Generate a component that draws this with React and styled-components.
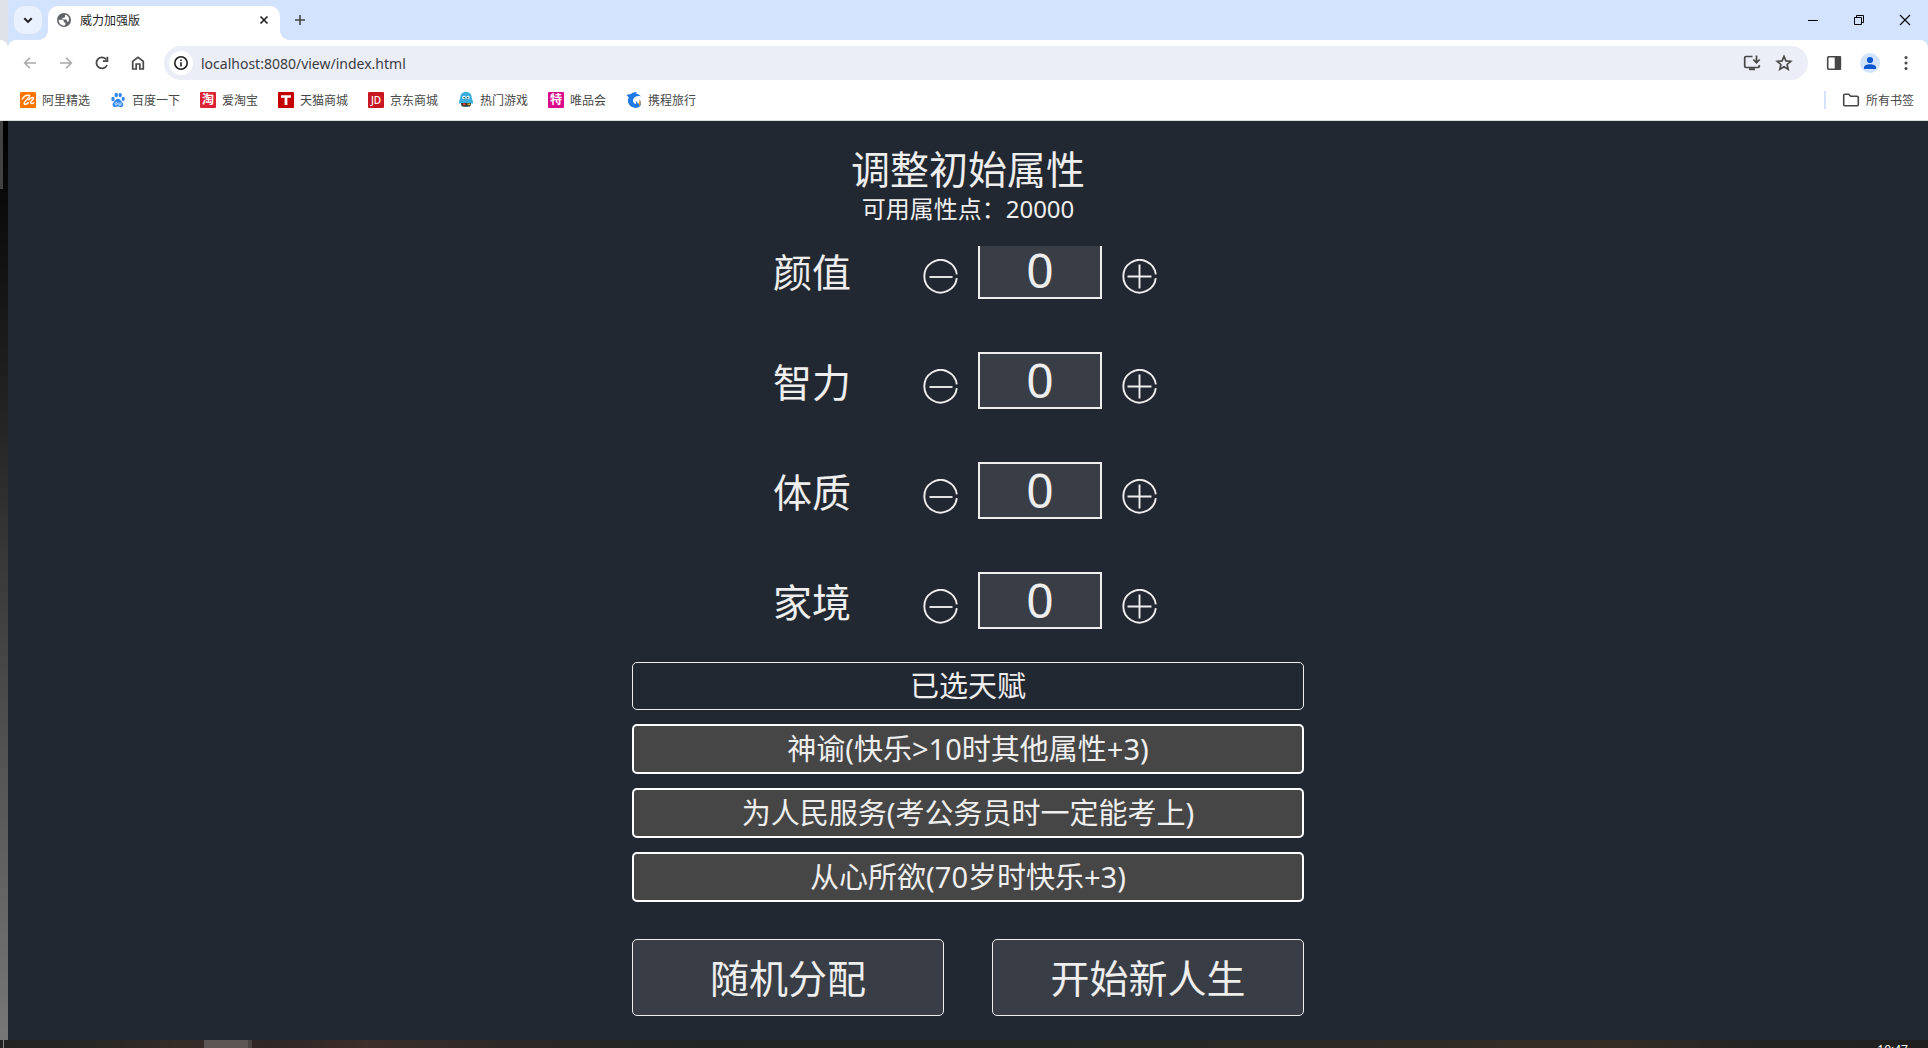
import React, { useState } from "react";
import styled, { createGlobalStyle } from "styled-components";

const GlobalStyle = createGlobalStyle`
  *, *::before, *::after { box-sizing: border-box; }
  body {
    margin: 0;
    background: #222831;
    font-family: "Noto Sans", "Noto Sans CJK SC", sans-serif;
  }
  button, input { font: inherit; margin: 0; padding: 0; }
`;

/* ---------- desktop ---------- */

const Desktop = styled.div`
  display: flex;
  flex-direction: column;
  min-height: 100vh;
`;

const Windows = styled.div`
  display: flex;
  flex: 1;
`;

const BackWindow = styled.div`
  display: flex;
  flex-direction: column;
  flex: none;
  width: 8px;
  background: #dde1e8;
`;

const BackToolbar = styled.div`
  height: 80px;
  margin-top: 40px;
  background: #fff;
  border-top-right-radius: 8px;
`;

const BackPage = styled.div`
  flex: 1;
  border-top: 1px solid #d6dfe0;
  background: linear-gradient(#000 0%, #0a0a0a 8%, #222 31%, #484848 60%, #777 100%);
`;

const BackThumb = styled.div`
  width: 3px;
  height: 68px;
  background: #424242;
`;

const Browser = styled.div`
  display: flex;
  flex-direction: column;
  flex: 1;
  min-width: 0;
  background: #d3e3fd;
`;

const Taskbar = styled.footer`
  display: flex;
  height: 8px;
  overflow: hidden;
  background: linear-gradient(90deg, #232423 0%, #272724 5%, #352b27 9%, #302625 14%, #3c2e29 19%, #2b2726 27%, #202624 37%, #232826 55%, #292824 66%, #362d25 83%, #242422 91%, #1f1f20 100%);
`;

const TaskDivider = styled.span`
  width: 1px;
  margin-left: 3px;
  background: #8a8a8a;
`;

const TaskActive = styled.span`
  width: 48px;
  margin-left: 200px;
  border-right: 4px solid #4b4443;
  background: #5e5654;
`;

const Clock = styled.time`
  margin: 2px 20px 0 auto;
  color: #fff;
  font-size: 12px;
  line-height: 16px;
`;

/* ---------- browser chrome ---------- */

const IconButton = styled.button`
  display: grid;
  place-items: center;
  flex: none;
  width: ${(p) => p.$w || 36}px;
  height: ${(p) => p.$h || 34}px;
  border: 0;
  border-radius: ${(p) => p.$radius || 0}px;
  background: ${(p) => p.$bg || "transparent"};
  color: ${(p) => p.$color || "#474747"};
`;

const TitleBar = styled.header`
  display: flex;
  align-items: flex-start;
  height: 40px;
  padding: 6px 0 0 6px;
`;

const Tab = styled.div`
  position: relative;
  display: flex;
  align-items: center;
  width: 232px;
  height: 34px;
  margin-left: 6px;
  padding: 0 6px 6px 8px;
  border-radius: 10px 10px 0 0;
  background: #fff;

  &::before, &::after {
    content: "";
    position: absolute;
    bottom: 0;
    width: 10px;
    height: 10px;
  }
  &::before {
    right: 100%;
    background: radial-gradient(circle at 0 0, transparent 10px, #fff 10px);
  }
  &::after {
    left: 100%;
    background: radial-gradient(circle at 100% 0, transparent 10px, #fff 10px);
  }
`;

const TabTitle = styled.span`
  flex: 1;
  padding-top: 2px;
  margin-left: 8px;
  color: #1f1f1f;
  font-size: 12px;
  line-height: 16px;
`;

const WindowControls = styled.div`
  display: flex;
  margin-left: auto;
`;

const Toolbar = styled.div`
  display: flex;
  align-items: center;
  height: 46px;
  padding: 0 4px;
  border-radius: 8px 8px 0 0;
  background: #fff;
`;

const AddressBar = styled.div`
  display: flex;
  align-items: center;
  flex: 1;
  height: 34px;
  margin: 0 8px;
  padding: 0 8px 0 5px;
  border-radius: 17px;
  background: #ebeef7;
`;

const AddressInput = styled.input`
  flex: 1;
  min-width: 0;
  height: 24px;
  margin-left: 8px;
  border: 0;
  outline: 0;
  background: transparent;
  color: #3a3b3f;
  font-family: "Noto Sans", sans-serif;
  font-size: 14px;
`;

const Bookmarks = styled.nav`
  display: flex;
  align-items: center;
  gap: 20px;
  height: 34px;
  padding: 0 14px 6px 12px;
  background: #fff;
`;

const Bookmark = styled.a`
  display: flex;
  align-items: center;
  gap: 6px;
  color: #474747;
  font-size: 12px;
  line-height: 16px;
  text-decoration: none;
`;

const BookmarkName = styled.span`
  padding-top: 2px;
`;

const AllBookmarks = styled(Bookmark)`
  margin-left: auto;
  padding-left: 16px;
  border-left: 2px solid #d3e3fd;
`;

/* ---------- page ---------- */

const Page = styled.main`
  display: flex;
  flex-direction: column;
  align-items: center;
  flex: 1;
  padding: 25px 0 24px;
  border-top: 1px solid #d6dfe0;
  background: #222831;
  color: #eee;
`;

const Title = styled.h1`
  margin: 0;
  font-size: 39px;
  font-weight: 400;
  line-height: 46px;
`;

const Points = styled.p`
  margin: 0;
  font-size: 24px;
  line-height: 34px;
`;

const Attributes = styled.ul`
  display: flex;
  flex-direction: column;
  justify-content: flex-end;
  gap: 53px;
  width: 390px;
  height: 383px;
  margin: 20px 0 0;
  padding: 0;
  overflow: hidden;
  list-style: none;
`;

const Attribute = styled.li`
  display: flex;
  align-items: center;
  flex: none;
  gap: 20px;
  height: 57px;
  padding-right: 6px;
`;

const AttributeName = styled.label`
  flex: 1;
  padding-top: 2px;
  font-size: 39px;
  line-height: 46px;
`;

const StepButton = styled.button`
  display: block;
  width: 35px;
  height: 47px;
  padding-top: 12px;
  border: 0;
  background: transparent;
  color: #eee;
  cursor: pointer;

  svg { display: block; }
`;

const AttributeValue = styled.input`
  width: 124px;
  height: 57px;
  padding-bottom: 2px;
  border: 2px solid #eee;
  border-radius: 0;
  outline: 0;
  background: #393e46;
  color: #eee;
  font-size: 48px;
  line-height: 48px;
  text-align: center;
`;

const Talents = styled.ul`
  display: flex;
  flex-direction: column;
  gap: 14px;
  width: 35%;
  margin: 33px 0 0;
  padding: 0;
  list-style: none;
`;

const Talent = styled.li`
  height: ${(p) => (p.$heading ? 48 : 50)}px;
  border: ${(p) => (p.$heading ? "1px solid #eee" : "2px solid #fff")};
  border-radius: 5px;
  background: ${(p) => (p.$heading ? "transparent" : "#464646")};
  font-size: 29px;
  line-height: 46px;
  text-align: center;
`;

const Actions = styled.div`
  display: flex;
  gap: 48px;
  width: 35%;
  margin-top: 37px;
`;

const ActionButton = styled.button`
  flex: 1;
  height: 77px;
  border: 1px solid #eee;
  border-radius: 5px;
  background: #393e46;
  color: #eee;
  font-size: 39px;
  line-height: 46px;
  cursor: pointer;
`;

/* ---------- icons ---------- */

const Icon = ({ size = 16, children, ...rest }) => (
  <svg width={size} height={size} viewBox={`0 0 ${size} ${size}`} fill="none" stroke="currentColor" strokeWidth="1.6" aria-hidden="true" {...rest}>
    {children}
  </svg>
);

const GlobeIcon = () => (
  <Icon stroke="none">
    <circle cx="8" cy="8" r="7" fill="#5f6368" />
    <path d="M2.6 7.8h3.2c1.5 0 2 .8 2 2v.6h1.6v2.4c-.6.8-1.6 1-2.6.8C4.2 13 2.6 10.5 2.6 7.8z" fill="#fff" />
    <path d="M9 2.7v1.5c0 1-.7 1.5-1.700 1.500h-.9v1.700h3.200c1 0 1.400.7 1.400 1.500v.9h1.300c.9-1.700 1-3.600-.2-5.200C11.300 3.400 10.200 2.800 9 2.700z" fill="#fff" />
  </Icon>
);

const BackIcon = () => <Icon><path d="M14 8H3M8 2.700L2.700 8 8 13.300" /></Icon>;
const ForwardIcon = () => <Icon><path d="M2 8h11M8 2.700L13.300 8 8 13.300" /></Icon>;
const ReloadIcon = () => (
  <Icon strokeWidth="1.800">
    <path d="M13 10A5.500 5.500 0 1 1 12.300 4.500" />
    <path d="M13.400 1.700v4.500H8.900" />
  </Icon>
);
const HomeIcon = () => (
  <Icon strokeWidth="1.700">
    <path d="M2.700 14V6.300L8 2.300l5.300 4V14H9.800V9H6.200v5z" />
  </Icon>
);
const InfoIcon = () => (
  <Icon>
    <circle cx="8" cy="8" r="6.200" />
    <path d="M8 7.200V11.500M8 4.500v1.600" />
  </Icon>
);
const InstallIcon = () => (
  <Icon size={18} strokeWidth="1.700">
    <path d="M9.500 2.500H3A1.300 1.300 0 0 0 1.700 3.800v8.400A1.300 1.300 0 0 0 3 13.500h12a1.300 1.300 0 0 0 1.300-1.300V11" />
    <path d="M6 15.200h6" strokeWidth="2" />
    <path d="M13.500 1.500v7M10.300 5.500l3.200 3.200 3.200-3.200" />
  </Icon>
);
const StarIcon = () => (
  <Icon size={18}>
    <path d="M9 2.400l1.900 4.500 4.900.4-3.700 3.200 1.100 4.800L9 12.700l-4.200 2.600 1.100-4.800-3.700-3.200 4.900-.4z" strokeWidth="1.600" />
  </Icon>
);
const PanelIcon = () => (
  <Icon>
    <rect x="1.700" y="1.700" width="12.600" height="12.600" rx="1" />
    <path d="M9.500 2h4.800v12H9.500z" fill="currentColor" />
  </Icon>
);
const ProfileIcon = () => (
  <Icon size={20} stroke="none">
    <circle cx="10" cy="10" r="10" fill="#d3e3fd" />
    <circle cx="10" cy="7" r="3.100" fill="#0b57d0" />
    <path d="M4 16v-1.500c0-2.200 3-3.300 6-3.300s6 1.100 6 3.300V16z" fill="#0b57d0" />
  </Icon>
);
const MoreIcon = () => (
  <Icon fill="currentColor" stroke="none">
    <circle cx="8" cy="2.600" r="1.500" /><circle cx="8" cy="8" r="1.500" /><circle cx="8" cy="13.400" r="1.500" />
  </Icon>
);
const FolderIcon = () => (
  <Icon size={18}>
    <path d="M1.700 13.500v-9A1.200 1.200 0 0 1 2.900 3.300h3.900l1.900 2h6.400a1.200 1.200 0 0 1 1.200 1.200v7a1.200 1.200 0 0 1-1.200 1.200H2.900a1.200 1.200 0 0 1-1.200-1.200z" />
  </Icon>
);

const AliIcon = () => (
  <Icon>
    <rect width="16" height="16" rx="1.500" fill="#ff7300" stroke="none" />
    <path d="M2 7.500C3.500 4.500 6.500 3 8.800 3.300c1.700.3.300 2.200-1.800 4.200-2 1.900-3.400 3.500-2.600 4.400.9.900 3-.2 4.300-1.700" stroke="#fff" strokeWidth="1.500" />
    <path d="M8.500 8.200c1.500-1.700 3.400-3 4.600-2.500 1.300.6-.5 2-1.600 3.200-1 1.100-1.300 2.500 0 2.700 1 .1 2-.5 2.700-1.200" stroke="#fff" strokeWidth="1.400" />
  </Icon>
);
const PawIcon = () => (
  <Icon stroke="none" fill="#2f86f6">
    <ellipse cx="3" cy="7" rx="1.700" ry="2.200" />
    <ellipse cx="6.200" cy="3" rx="1.700" ry="2.200" />
    <ellipse cx="10.200" cy="3.100" rx="1.700" ry="2.200" />
    <ellipse cx="13.200" cy="6.900" rx="1.600" ry="2.100" />
    <path d="M8 6.800c1.800 0 2.500 1.700 4 3.200 2.500 2.500 1 5-1 5-1.200 0-2-.5-3-.5s-1.900.5-3.100.5c-2.200 0-3.500-2.700-1-5C5.500 8.600 6.200 6.800 8 6.800z" />
    <circle cx="6.200" cy="11.800" r="1.200" fill="none" stroke="#fff" strokeWidth=".8" />
    <path d="M9 10.300v2.800h2v-2.800" fill="none" stroke="#fff" strokeWidth=".8" />
  </Icon>
);
const SquareIcon = ({ color, label, size, y, weight = 500 }) => (
  <Icon>
    <rect width="16" height="16" rx="1" fill={color} stroke="none" />
    <text x="8" y={y} fontSize={size} stroke="none" fill="#fff" textAnchor="middle" fontWeight={weight}>{label}</text>
  </Icon>
);
const TmallIcon = () => (
  <Icon stroke="none">
    <rect width="16" height="16" rx="1" fill="#c40000" />
    <path d="M3 3.200h10v2.500H9.400V13H6.600V5.700H3z" fill="#fff" />
  </Icon>
);
const GameIcon = () => (
  <Icon stroke="none">
    <path d="M8 0c3.700 0 5.700 2.200 5.700 5.300 0 2 1.800 4.200 1.500 6.200-.7.400-1.500-.3-1.700-.7-.3 1.700-2 4.200-5.500 4.200s-5.200-2.500-5.500-4.200c-.2.400-1 1.100-1.700.7-.3-2 1.500-4.200 1.500-6.200C2.300 2.200 4.300 0 8 0z" fill="#39afdd" />
    <circle cx="6" cy="5.500" r="1.700" fill="#fff" /><circle cx="10" cy="5.500" r="1.700" fill="#fff" />
    <circle cx="6.200" cy="5.700" r=".8" fill="#222" /><circle cx="9.800" cy="5.700" r=".8" fill="#222" />
    <path d="M3 11h10l-.8 3.500H3.800z" fill="#333" />
    <path d="M5 11.300h2.500v2H5z" fill="#e04a2c" />
    <path d="M9.500 11.500H12v1.600H9.500z" fill="#f3b22c" />
  </Icon>
);
const DolphinIcon = () => (
  <Icon stroke="none">
    <path d="M.5 3.800C1.800 2 3.500 2.300 4.800 2 6.500.3 9 0 11 .5c-.6.4-.8.900-.7 1.300 2 .3 3.700 1.200 4.500 2.700-2-.6-4-.5-5.300.3C7.500 6 6.500 8 7.300 10c.5 1.300 1.700 2 2.500 2 .5-1 .3-2-.5-3 1.800.5 2.400 1.500 2.500 2.800 1.500-.8 2-2.300 1.700-4.300 2.200 2.500 2 5.200.2 7-2 2-6.700 2-9.500-.7C1.700 11.300 1.200 8 2.800 5.200 2 4.500 1.300 4 .5 3.800z" fill="#1f7ae6" />
    <path d="M13.300 7.500c2.200 2.500 1.700 5.500-.5 7 .8-1.500.7-2.300-.3-3.200.8-1 1.100-2.300.8-3.800z" fill="#f7a428" />
  </Icon>
);

const RING = "M33.800 15.300A16.300 16.300 0 1 0 33.800 19.200";

const MinusIcon = () => (
  <Icon size={35} strokeWidth="1.900">
    <path d={RING} />
    <path d="M6.500 18h23" />
  </Icon>
);
const PlusIcon = () => (
  <Icon size={35} strokeWidth="1.900">
    <path d={RING} />
    <path d="M5.500 17.500h24M17.500 5.500v24" />
  </Icon>
);

/* ---------- data ---------- */

const TOTAL_POINTS = 20000;

const bookmarks = [
  { name: "阿里精选", icon: <AliIcon /> },
  { name: "百度一下", icon: <PawIcon /> },
  { name: "爱淘宝", icon: <SquareIcon color="#db2334" label="淘" size={12} y={12} weight={700} /> },
  { name: "天猫商城", icon: <TmallIcon /> },
  { name: "京东商城", icon: <SquareIcon color="#c81623" label="JD" size={10} y={12} /> },
  { name: "热门游戏", icon: <GameIcon /> },
  { name: "唯品会", icon: <SquareIcon color="#da0c8c" label="特" size={12} y={12} weight={700} /> },
  { name: "携程旅行", icon: <DolphinIcon /> },
];

const attributes = [
  { key: "looks", name: "颜值" },
  { key: "mind", name: "智力" },
  { key: "body", name: "体质" },
  { key: "wealth", name: "家境" },
];

const talents = [
  "神谕(快乐>10时其他属性+3)",
  "为人民服务(考公务员时一定能考上)",
  "从心所欲(70岁时快乐+3)",
];

/* ---------- app ---------- */

function BrowserChrome() {
  return (
    <>
      <TitleBar>
        <IconButton $w={28} $h={28} $radius={10} $bg="#e9f0fe" $color="#1f1f1f" aria-label="搜索标签页">
          <Icon strokeWidth="2"><path d="M4.300 6.200L8 9.900l3.700-3.700" /></Icon>
        </IconButton>
        <Tab>
          <GlobeIcon />
          <TabTitle>威力加强版</TabTitle>
          <IconButton $w={20} $h={20} $color="#1f1f1f" aria-label="关闭标签页">
            <Icon><path d="M4.500 4.500l7 7M11.500 4.500l-7 7" /></Icon>
          </IconButton>
        </Tab>
        <IconButton $w={40} $h={28} aria-label="新标签页">
          <Icon><path d="M8 3v10M3 8h10" /></Icon>
        </IconButton>
        <WindowControls>
          <IconButton $w={46} $h={28} $color="#000" aria-label="最小化">
            <Icon strokeWidth="1"><path d="M3 8.500h10" /></Icon>
          </IconButton>
          <IconButton $w={46} $h={28} $color="#000" aria-label="还原">
            <Icon strokeWidth="1"><path d="M3.500 5.500h7v7h-7zM5.500 5.500v-2h7v7h-2" /></Icon>
          </IconButton>
          <IconButton $w={46} $h={28} $color="#000" aria-label="关闭">
            <Icon strokeWidth="1.100"><path d="M3 3l10 10M13 3L3 13" /></Icon>
          </IconButton>
        </WindowControls>
      </TitleBar>
      <Toolbar>
        <IconButton $color="#a9a9a9" aria-label="后退"><BackIcon /></IconButton>
        <IconButton $color="#a9a9a9" aria-label="前进"><ForwardIcon /></IconButton>
        <IconButton aria-label="重新加载"><ReloadIcon /></IconButton>
        <IconButton aria-label="主页"><HomeIcon /></IconButton>
        <AddressBar>
          <IconButton $w={24} $h={24} $radius={12} $bg="#fff" $color="#1f1f1f" aria-label="网站信息"><InfoIcon /></IconButton>
          <AddressInput type="text" aria-label="地址" defaultValue="localhost:8080/view/index.html" />
          <IconButton $w={32} aria-label="安装"><InstallIcon /></IconButton>
          <IconButton $w={32} aria-label="收藏"><StarIcon /></IconButton>
        </AddressBar>
        <IconButton aria-label="侧边栏"><PanelIcon /></IconButton>
        <IconButton aria-label="个人资料"><ProfileIcon /></IconButton>
        <IconButton aria-label="更多"><MoreIcon /></IconButton>
      </Toolbar>
      <Bookmarks>
        {bookmarks.map((b) => (
          <Bookmark key={b.name} href="#">
            {b.icon}
            <BookmarkName>{b.name}</BookmarkName>
          </Bookmark>
        ))}
        <AllBookmarks href="#">
          <FolderIcon />
          <BookmarkName>所有书签</BookmarkName>
        </AllBookmarks>
      </Bookmarks>
    </>
  );
}

function PropertyPage() {
  const [values, setValues] = useState({ looks: 0, mind: 0, body: 0, wealth: 0 });
  const used = Object.values(values).reduce((sum, v) => sum + v, 0);
  const left = TOTAL_POINTS - used;

  const setValue = (key, next) => {
    const limit = left + values[key];
    setValues({ ...values, [key]: Math.max(0, Math.min(limit, next || 0)) });
  };

  const distribute = () => {
    const cuts = [0, 0, 0].map(() => Math.floor(Math.random() * TOTAL_POINTS)).sort((a, b) => a - b);
    const edges = [0, ...cuts, TOTAL_POINTS];
    setValues(Object.fromEntries(attributes.map((a, i) => [a.key, edges[i + 1] - edges[i]])));
  };

  return (
    <Page>
      <Title>调整初始属性</Title>
      <Points>可用属性点：{left}</Points>
      <Attributes>
        {attributes.map(({ key, name }) => (
          <Attribute key={key}>
            <AttributeName htmlFor={key}>{name}</AttributeName>
            <StepButton type="button" aria-label={`${name}减少`} onClick={() => setValue(key, values[key] - 1)}>
              <MinusIcon />
            </StepButton>
            <AttributeValue
              id={key}
              type="text"
              inputMode="numeric"
              value={values[key]}
              onChange={(e) => setValue(key, parseInt(e.target.value, 10))}
            />
            <StepButton type="button" aria-label={`${name}增加`} onClick={() => setValue(key, values[key] + 1)}>
              <PlusIcon />
            </StepButton>
          </Attribute>
        ))}
      </Attributes>
      <Talents>
        <Talent $heading>已选天赋</Talent>
        {talents.map((t) => <Talent key={t}>{t}</Talent>)}
      </Talents>
      <Actions>
        <ActionButton type="button" onClick={distribute}>随机分配</ActionButton>
        <ActionButton type="button">开始新人生</ActionButton>
      </Actions>
    </Page>
  );
}

export default function App() {
  return (
    <Desktop>
      <GlobalStyle />
      <Windows>
        <BackWindow>
          <BackToolbar />
          <BackPage><BackThumb /></BackPage>
        </BackWindow>
        <Browser>
          <BrowserChrome />
          <PropertyPage />
        </Browser>
      </Windows>
      <Taskbar>
        <TaskDivider />
        <TaskActive />
        <Clock>10:47</Clock>
      </Taskbar>
    </Desktop>
  );
}
